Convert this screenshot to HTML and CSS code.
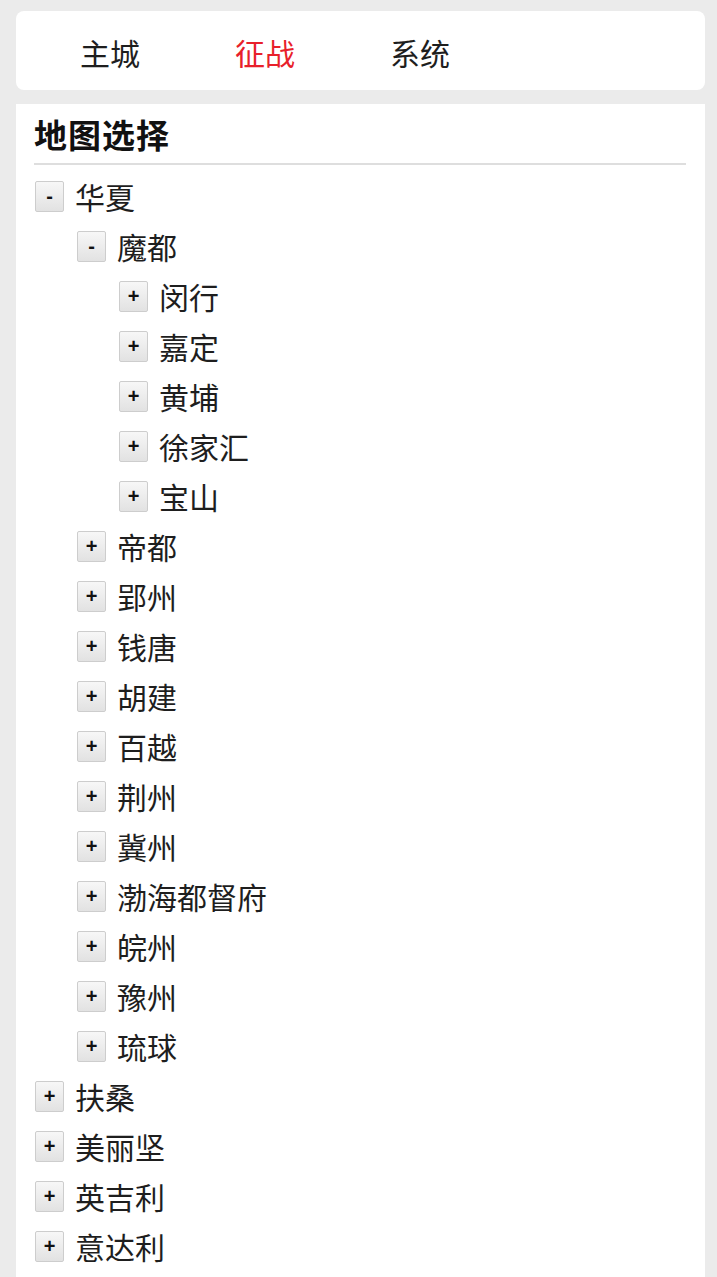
FILE: index.html
```html
<!DOCTYPE html>
<html lang="zh-CN">
<head>
    <meta charset="UTF-8">
    <meta name="viewport" content="width=device-width, initial-scale=1.0">
    <title>征战 - 地图选择</title>
    <link rel="stylesheet" href="styles.css">
</head>
<body>

    <!-- 顶部导航 -->
    <div class="nav">
        <a class="nav-item">主城</a>
        <a class="nav-item active">征战</a>
        <a class="nav-item">系统</a>
    </div>

    <!-- 地图选择 -->
    <div class="panel">
        <h2 class="panel-title">地图选择</h2>
        <ul class="tree">
            <li>
                <div class="node"><span class="toggle">-</span><span class="label">华夏</span></div>
                <ul>
                    <li>
                        <div class="node"><span class="toggle">-</span><span class="label">魔都</span></div>
                        <ul>
                            <li><div class="node"><span class="toggle">+</span><span class="label">闵行</span></div></li>
                            <li><div class="node"><span class="toggle">+</span><span class="label">嘉定</span></div></li>
                            <li><div class="node"><span class="toggle">+</span><span class="label">黄埔</span></div></li>
                            <li><div class="node"><span class="toggle">+</span><span class="label">徐家汇</span></div></li>
                            <li><div class="node"><span class="toggle">+</span><span class="label">宝山</span></div></li>
                        </ul>
                    </li>
                    <li><div class="node"><span class="toggle">+</span><span class="label">帝都</span></div></li>
                    <li><div class="node"><span class="toggle">+</span><span class="label">郢州</span></div></li>
                    <li><div class="node"><span class="toggle">+</span><span class="label">钱唐</span></div></li>
                    <li><div class="node"><span class="toggle">+</span><span class="label">胡建</span></div></li>
                    <li><div class="node"><span class="toggle">+</span><span class="label">百越</span></div></li>
                    <li><div class="node"><span class="toggle">+</span><span class="label">荆州</span></div></li>
                    <li><div class="node"><span class="toggle">+</span><span class="label">冀州</span></div></li>
                    <li><div class="node"><span class="toggle">+</span><span class="label">渤海都督府</span></div></li>
                    <li><div class="node"><span class="toggle">+</span><span class="label">皖州</span></div></li>
                    <li><div class="node"><span class="toggle">+</span><span class="label">豫州</span></div></li>
                    <li><div class="node"><span class="toggle">+</span><span class="label">琉球</span></div></li>
                </ul>
            </li>
            <li><div class="node"><span class="toggle">+</span><span class="label">扶桑</span></div></li>
            <li><div class="node"><span class="toggle">+</span><span class="label">美丽坚</span></div></li>
            <li><div class="node"><span class="toggle">+</span><span class="label">英吉利</span></div></li>
            <li><div class="node"><span class="toggle">+</span><span class="label">意达利</span></div></li>
        </ul>
    </div>

</body>
</html>
```

FILE: styles.css
```css
:root {
    --bg: #ebebeb;
    --text: #1e1e1e;
    --active: #e8202a;
    --line: #dedede;
}

* {
    margin: 0;
    padding: 0;
    box-sizing: border-box;
}

body {
    background: var(--bg);
    color: var(--text);
    font-family: "Noto Sans CJK SC", "Noto Sans", sans-serif;
    padding: 11px 12px 0 16px;
    min-height: 100vh;
}

/* 顶部导航 */
.nav {
    display: flex;
    align-items: center;
    height: 79px;
    padding: 3px 0 0 64px;
    background: #fff;
    border-radius: 8px;
}

.nav-item {
    width: 155px;
    font-size: 30px;
    color: var(--text);
    cursor: pointer;
}

.nav-item.active {
    color: var(--active);
}

/* 面板 */
.panel {
    background: #fff;
    margin-top: 14px;
    padding: 10px 19px 0 18px;
    min-height: calc(100vh - 104px);
}

.panel-title {
    font-size: 33px;
    font-weight: bold;
    line-height: 40px;
    letter-spacing: 1px;
    padding-bottom: 9px;
    border-bottom: 2px solid var(--line);
    color: #111;
}

/* 树形列表 */
.tree {
    list-style: none;
    margin-top: 6px;
    padding-left: 1px;
}

.tree ul {
    list-style: none;
    padding-left: 42px;
}

.node {
    display: flex;
    align-items: center;
    height: 50px;
}

.toggle {
    width: 29px;
    height: 31px;
    display: flex;
    align-items: center;
    justify-content: center;
    font-family: "Liberation Sans", sans-serif;
    font-size: 20px;
    font-weight: bold;
    color: #111;
    background: linear-gradient(#f7f7f7, #e2e2e2);
    border: 1px solid #cdcdcd;
    border-radius: 2px;
    cursor: pointer;
}

.label {
    margin-left: 11px;
    font-size: 30px;
    line-height: 1;
}
```
